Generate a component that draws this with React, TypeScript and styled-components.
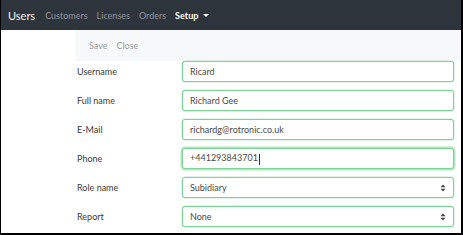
import React from 'react'
import styled, { createGlobalStyle } from 'styled-components'

const Global = createGlobalStyle`
  html, body {
    margin: 0;
    padding: 0;
    background: #fff;
  }
  body {
    font-family: Lato, 'Open Sans', 'Liberation Sans', sans-serif;
  }
`

const Frame = styled.div`
  width: 463px;
  height: 235px;
  box-sizing: border-box;
  border-left: 1px solid #000;
  border-right: 2px solid #000;
  border-bottom: 2px solid #000;
  display: flex;
  flex-direction: column;
  overflow: hidden;
`

const Navbar = styled.nav`
  height: 30px;
  background: #2e343c;
  display: flex;
  align-items: center;
  padding-left: 7px;
  gap: 9px;
`

const Brand = styled.span`
  color: #f1f3f5;
  font-size: 11px;
  margin-right: 1px;
`

const NavLink = styled.span<{ active?: boolean }>`
  color: ${(p) => (p.active ? '#ffffff' : '#8e959c')};
  font-weight: ${(p) => (p.active ? 700 : 400)};
  font-size: 9px;
  display: flex;
  align-items: center;
`

const Caret = styled.span`
  display: inline-block;
  margin-left: 5px;
  border-left: 3px solid transparent;
  border-right: 3px solid transparent;
  border-top: 3px solid #fff;
`

const Main = styled.div`
  margin-left: 74px;
  display: flex;
  flex-direction: column;
`

const Toolbar = styled.div`
  height: 31px;
  background: #f7f8fa;
  display: flex;
  align-items: center;
  gap: 9px;
  padding-left: 14px;
`

const ToolButton = styled.span`
  color: #9a9ea3;
  font-size: 9px;
`

const Form = styled.div`
  display: grid;
  grid-template-columns: 107px 272px;
  row-gap: 8px;
`

const Label = styled.label`
  font-size: 9px;
  color: #3a3a3a;
  display: flex;
  align-items: center;
  padding-left: 2px;
`

const Field = styled.div<{ focused?: boolean }>`
  height: 21px;
  box-sizing: border-box;
  border: 1px solid #7bd396;
  border-radius: 3px;
  box-shadow: ${(p) =>
    p.focused
      ? '0 0 0 1.5px rgba(116, 207, 141, 0.55)'
      : '0 0 0 0.5px rgba(123, 211, 150, 0.45)'};
  display: flex;
  align-items: center;
  padding: 0 7px;
  font-size: 9px;
  color: #4a4a4a;
  background: #fff;
`

const Value = styled.span`
  flex: 1;
  white-space: nowrap;
`

const TextCaret = styled.span`
  display: inline-block;
  width: 1px;
  height: 11px;
  background: #333;
  vertical-align: middle;
  margin-left: 1px;
`

const SelectArrows = () => (
  <svg width="6" height="8" viewBox="0 0 6 8">
    <path d="M0.5 3.2 L3 0.6 L5.5 3.2 Z" fill="#444" />
    <path d="M0.5 4.8 L3 7.4 L5.5 4.8 Z" fill="#444" />
  </svg>
)

const rows = [
  { label: 'Username', value: 'Ricard' },
  { label: 'Full name', value: 'Richard Gee' },
  { label: 'E-Mail', value: 'richardg@rotronic.co.uk' },
  { label: 'Phone', value: '+441293843701', focused: true },
  { label: 'Role name', value: 'Subidiary', select: true },
  { label: 'Report', value: 'None', select: true },
]

export default function App() {
  return (
    <>
      <Global />
      <Frame>
        <Navbar>
          <Brand>Users</Brand>
          <NavLink>Customers</NavLink>
          <NavLink>Licenses</NavLink>
          <NavLink>Orders</NavLink>
          <NavLink active>
            Setup
            <Caret />
          </NavLink>
        </Navbar>
        <Main>
          <Toolbar>
            <ToolButton>Save</ToolButton>
            <ToolButton>Close</ToolButton>
          </Toolbar>
          <Form>
            {rows.map((r) => (
              <React.Fragment key={r.label}>
                <Label>{r.label}</Label>
                <Field focused={r.focused}>
                  <Value>
                    {r.value}
                    {r.focused && <TextCaret />}
                  </Value>
                  {r.select && <SelectArrows />}
                </Field>
              </React.Fragment>
            ))}
          </Form>
        </Main>
      </Frame>
    </>
  )
}
